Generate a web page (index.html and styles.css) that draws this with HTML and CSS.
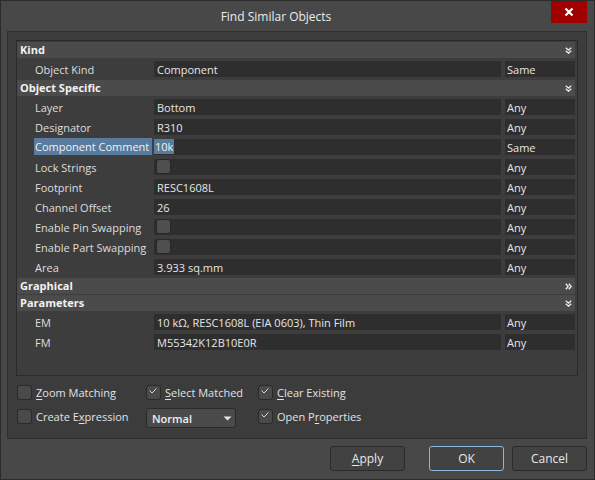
FILE: index.html
```html
<!DOCTYPE html>
<html>
<head>
<meta charset="utf-8">
<link rel="stylesheet" href="styles.css">
</head>
<body>
<div class="window">
  <div class="titlebar">
    <div class="title">Find Similar Objects</div>
    <div class="close">
      <svg width="10" height="10" viewBox="0 0 10 10"><path d="M1.5 1.5 L8.5 8.5 M8.5 1.5 L1.5 8.5" stroke="#ffffff" stroke-width="2.2" fill="none"/></svg>
    </div>
  </div>
  <div class="panel">
    <div class="list">
      <div class="group"><span>Kind</span><svg class="chev" width="7" height="7" viewBox="0 0 7 7"><path d="M0.8 0.8 L3.5 3.2 L6.2 0.8 M0.8 3.8 L3.5 6.2 L6.2 3.8" stroke="#f0f0f0" stroke-width="1.3" fill="none"/></svg></div>
      <div class="row"><div class="name">Object Kind</div><div class="val">Component</div><div class="mode">Same</div></div>
      <div class="group"><span>Object Specific</span><svg class="chev" width="7" height="7" viewBox="0 0 7 7"><path d="M0.8 0.8 L3.5 3.2 L6.2 0.8 M0.8 3.8 L3.5 6.2 L6.2 3.8" stroke="#f0f0f0" stroke-width="1.3" fill="none"/></svg></div>
      <div class="row"><div class="name">Layer</div><div class="val">Bottom</div><div class="mode">Any</div></div>
      <div class="row"><div class="name">Designator</div><div class="val">R310</div><div class="mode">Any</div></div>
      <div class="row"><div class="name"><span class="sel-name">Component Comment</span></div><div class="val"><span class="sel-val">10k</span></div><div class="mode">Same</div></div>
      <div class="row"><div class="name">Lock Strings</div><div class="val cbcell"><span class="cellbox"></span></div><div class="mode">Any</div></div>
      <div class="row"><div class="name">Footprint</div><div class="val">RESC1608L</div><div class="mode">Any</div></div>
      <div class="row"><div class="name">Channel Offset</div><div class="val">26</div><div class="mode">Any</div></div>
      <div class="row"><div class="name">Enable Pin Swapping</div><div class="val cbcell"><span class="cellbox"></span></div><div class="mode">Any</div></div>
      <div class="row"><div class="name">Enable Part Swapping</div><div class="val cbcell"><span class="cellbox"></span></div><div class="mode">Any</div></div>
      <div class="row"><div class="name">Area</div><div class="val">3.933 sq.mm</div><div class="mode">Any</div></div>
      <div class="group"><span>Graphical</span><svg class="chev" width="7" height="7" viewBox="0 0 7 7"><path d="M0.8 0.8 L3.2 3.5 L0.8 6.2 M3.8 0.8 L6.2 3.5 L3.8 6.2" stroke="#f0f0f0" stroke-width="1.3" fill="none"/></svg></div>
      <div class="group"><span>Parameters</span><svg class="chev" width="7" height="7" viewBox="0 0 7 7"><path d="M0.8 0.8 L3.5 3.2 L6.2 0.8 M0.8 3.8 L3.5 6.2 L6.2 3.8" stroke="#f0f0f0" stroke-width="1.3" fill="none"/></svg></div>
      <div class="row"><div class="name">EM</div><div class="val">10 kΩ, RESC1608L (EIA 0603), Thin Film</div><div class="mode">Any</div></div>
      <div class="row"><div class="name">FM</div><div class="val">M55342K12B10E0R</div><div class="mode">Any</div></div>
    </div>
    <div class="options">
      <div class="opt"><span class="box"></span><span><u>Z</u>oom Matching</span></div>
      <div class="opt"><span class="box"><svg width="13" height="13" viewBox="0 0 13 13"><path d="M2.5 4.5 L5 7 L9.5 2.5" stroke="#d8d8d8" stroke-width="1" fill="none"/></svg></span><span><u>S</u>elect Matched</span></div>
      <div class="opt"><span class="box"><svg width="13" height="13" viewBox="0 0 13 13"><path d="M2.5 4.5 L5 7 L9.5 2.5" stroke="#d8d8d8" stroke-width="1" fill="none"/></svg></span><span><u>C</u>lear Existing</span></div>
      <div class="opt opt2"><span class="box"></span><span>Create E<u>x</u>pression</span></div>
      <div class="select"><span>Normal</span><svg width="9" height="5" viewBox="0 0 9 5"><path d="M0.5 0.5 L8.5 0.5 L4.5 4.5 Z" fill="#e6e6e6"/></svg></div>
      <div class="opt opt2"><span class="box"><svg width="13" height="13" viewBox="0 0 13 13"><path d="M2.5 4.5 L5 7 L9.5 2.5" stroke="#d8d8d8" stroke-width="1" fill="none"/></svg></span><span>Open P<u>r</u>operties</span></div>
    </div>
  </div>
  <div class="buttons">
    <div class="btn apply"><span><u>A</u>pply</span></div>
    <div class="btn ok">OK</div>
    <div class="btn">Cancel</div>
  </div>
</div>
</body>
</html>
```
FILE: styles.css
```css
* { box-sizing: border-box; }
body {
  margin: 0;
  background: #484848;
  font-family: "Open Sans", "Noto Sans", sans-serif;
  font-size: 11px;
  color: #e0e0e0;
}
.window {
  width: 595px;
  height: 480px;
  border: 1px solid #2b2b2b;
  background: #484848;
  display: flex;
  flex-direction: column;
}
.titlebar {
  height: 30px;
  display: flex;
  align-items: flex-start;
  flex: none;
}
.title {
  flex: 1;
  height: 30px;
  line-height: 31px;
  text-align: center;
  font-size: 12px;
  color: #ececec;
}
.close {
  width: 36px;
  height: 22px;
  margin-right: 7px;
  background: #a00000;
  display: flex;
  align-items: center;
  justify-content: center;
}
.panel {
  flex: none;
  margin: 0 7px 0 6px;
  height: 408px;
  border: 1px solid #2f2f2f;
  background: #3c3c3c;
  padding: 8px 8px 0 8px;
}
.list {
  height: 336px;
  border: 1px solid #2a2a2a;
  background: #3d3d3d;
  padding-right: 2px;
}
.group {
  height: 16px;
  margin: 1px 0;
  background: #4b4b4b;
  display: flex;
  align-items: center;
  justify-content: space-between;
  padding: 0 3px 0 3px;
  font-weight: 700;
  color: #f2f2f2;
  line-height: 18px;
}
.chev { display: block; }
.row {
  height: 20px;
  padding: 2px 0;
  display: flex;
  line-height: 17px;
}
.name {
  width: 137px;
  height: 16px;
  padding-left: 18px;
  color: #dedede;
  white-space: nowrap;
}
.val {
  width: 347px;
  height: 16px;
  background: #2e2e2e;
  padding-left: 3px;
  color: #e6e6e6;
  white-space: nowrap;
}
.mode {
  width: 70px;
  height: 16px;
  margin-left: 4px;
  background: #2e2e2e;
  padding-left: 2px;
  color: #e6e6e6;
}
.sel-name {
  display: inline-block;
  height: 17px;
  line-height: 18px;
  margin: -1px 0 0 -1px;
  padding: 0 3px 0 1px;
  background: #587b9e;
  color: #f2f2f2;
  vertical-align: top;
}
.sel-val {
  display: inline-block;
  height: 15px;
  line-height: 16px;
  margin: 0 0 0 -3px;
  padding: 0 1px 0 1px;
  background: #587b9e;
  color: #f2f2f2;
  vertical-align: top;
}
.cbcell {
  display: flex;
  align-items: flex-start;
  padding-left: 2px;
}
.cellbox {
  width: 15px;
  height: 15px;
  border-radius: 3px;
  background: #4f4f4f;
  border: 1px solid #272727;
}
.options {
  display: grid;
  grid-template-columns: 129px 112px auto;
  row-gap: 8px;
  margin-top: 9px;
  padding-left: 1px;
}
.opt {
  display: flex;
  align-items: center;
  gap: 4px;
  height: 15px;
  line-height: 16px;
  color: #e2e2e2;
}
.opt2 { height: 16px; line-height: 19px; }
.box {
  width: 15px;
  height: 15px;
  flex: none;
  border-radius: 3px;
  background: #4a4a4a;
  border: 1px solid #2a2a2a;
  display: flex;
  align-items: flex-start;
  justify-content: flex-start;
}
.box svg { display: block; }
u { text-decoration: underline; text-underline-offset: 2px; }
.select {
  width: 90px;
  height: 20px;
  border: 1px solid #2a2a2a;
  border-radius: 3px;
  background: #4a4a4a;
  display: flex;
  align-items: center;
  justify-content: space-between;
  padding: 1px 3px 0 5px;
  font-weight: 600;
  color: #f0f0f0;
}
.select svg { display: block; margin-top: -1px; }
.buttons {
  flex: none;
  display: flex;
  justify-content: flex-end;
  padding: 7px 7px 0 0;
  gap: 8px;
}
.btn {
  width: 75px;
  height: 25px;
  border: 1px solid #2a2a2a;
  border-radius: 3px;
  background: #424242;
  display: flex;
  align-items: center;
  justify-content: center;
  color: #e8e8e8;
  font-size: 12px;
}
.apply { margin-right: 16px; }
.ok { border-color: #8db6dc; }
```
